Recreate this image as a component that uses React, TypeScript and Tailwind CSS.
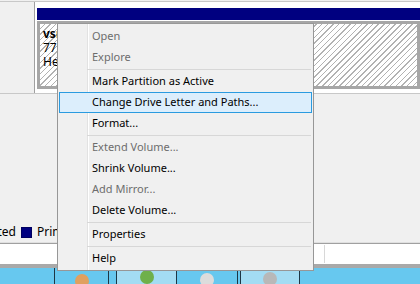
import React from 'react';

type Entry = { label?: string; disabled?: boolean; active?: boolean; sep?: boolean };

const menu: Entry[] = [
  { label: 'Open', disabled: true },
  { label: 'Explore', disabled: true },
  { sep: true },
  { label: 'Mark Partition as Active' },
  { label: 'Change Drive Letter and Paths...', active: true },
  { label: 'Format...' },
  { sep: true },
  { label: 'Extend Volume...', disabled: true },
  { label: 'Shrink Volume...' },
  { label: 'Add Mirror...', disabled: true },
  { label: 'Delete Volume...' },
  { sep: true },
  { label: 'Properties' },
  { sep: true },
  { label: 'Help' },
];

function ContextMenu() {
  return (
    <div className="absolute left-[57px] top-[23px] w-[257px] h-[248px] border border-[#979797] bg-[#f0f0f0] px-[1px] pt-[2px] flex flex-col">
      {/* icon gutter */}
      <div className="absolute left-[29px] top-0 bottom-0 w-px bg-[#e2e2e2]" />
      <div className="absolute left-[30px] top-0 bottom-0 w-px bg-white" />
      {menu.map((m, i) =>
        m.sep ? (
          <div key={i} className="h-[3px] pl-[28px] pr-[1px] flex flex-col justify-center relative">
            <div className="h-px bg-[#d7d7d7]" />
          </div>
        ) : (
          <div
            key={i}
            className={`relative h-[21px] flex items-center whitespace-nowrap ${
              m.active ? 'border border-[#2a9be0] bg-[#dceefc] pl-[32px]' : 'pl-[33px]'
            } ${m.disabled ? 'text-[#6d6d6d]' : 'text-black'}`}
          >
            {m.label}
          </div>
        )
      )}
    </div>
  );
}

function Tile({ w, light, icon }: { w: string; light?: boolean; icon?: string }) {
  return (
    <div className={`${w} h-full border-r border-[#1d3644] flex justify-center overflow-hidden ${light ? 'bg-[#a3dcf3]' : ''}`}>
      {icon && <div className={`w-[14px] h-[14px] rounded-full ${icon}`} />}
    </div>
  );
}

export default function App() {
  return (
    <div className="relative w-[420px] h-[284px] overflow-hidden bg-[#f0f0f0] flex flex-col font-['Noto_Sans',sans-serif] text-[11px] text-black">
      {/* disk row */}
      <div className="h-[93px] flex border-t border-[#c8c8c8] mt-[1px] border-b border-b-[#c8c8c8]">
        <div className="w-[35px] border-r border-[#a0a0a0] bg-[#f0f0f0]" />
        <div className="flex-1 bg-white pl-[2px] pt-[6px] flex flex-col">
          <div className="h-[12px] bg-[#000080]" />
          <div className="mt-[1px] h-[68px] border-[3px] border-[#a6a6a6] bg-[repeating-linear-gradient(135deg,#ffffff_0px,#ffffff_3px,#b2b2b2_3px,#b2b2b2_4px)] pl-[3px] pt-[3px] leading-[14px] text-[12px] whitespace-nowrap">
            <div className="font-bold">vsrv01 (C:)</div>
            <div>77.96 GB NTFS</div>
            <div>Healthy (Boot, Page File, Crash Dump)</div>
          </div>
        </div>
      </div>

      <div className="flex-1" />

      {/* legend */}
      <div className="h-[20px] flex items-center text-[12px] whitespace-nowrap">
        <div className="w-[16px] overflow-hidden flex justify-end">
          <span>Unallocated</span>
        </div>
        <div className="ml-[5px] w-[11px] h-[11px] bg-[#000080] border border-[#000060]" />
        <span className="ml-[5px]">Primary partition</span>
      </div>

      {/* status bar */}
      <div className="h-[22px] border-t border-[#e0e0e0] flex flex-col">
        <div className="flex-1 border-t border-[#a0a0a0] bg-white flex">
          <div className="w-[325px] border-r border-[#d8d8d8] my-[1px]" />
        </div>
      </div>
      <div className="h-[4px] bg-[#a9a9a9]" />

      {/* taskbar */}
      <div className="h-[16px] bg-[#67c8ef] flex flex-col">
        <div className="h-[8px]" />
        <div className="h-px bg-[#1b2c36]" />
        <div className="flex-1 flex">
          <Tile w="w-[55px]" />
          <Tile w="w-[54px]" icon="mt-[6px] bg-[#e0a060]" />
          <Tile w="w-[8px]" />
          <Tile w="w-[60px]" light icon="mt-[2px] bg-[#6fb04a]" />
          <Tile w="w-[61px]" icon="mt-[5px] bg-[#dcdcdc]" />
          <Tile w="w-[3px]" />
          <Tile w="w-[59px]" light icon="mt-[4px] bg-[#b8b8b8]" />
        </div>
      </div>

      <ContextMenu />
    </div>
  );
}
